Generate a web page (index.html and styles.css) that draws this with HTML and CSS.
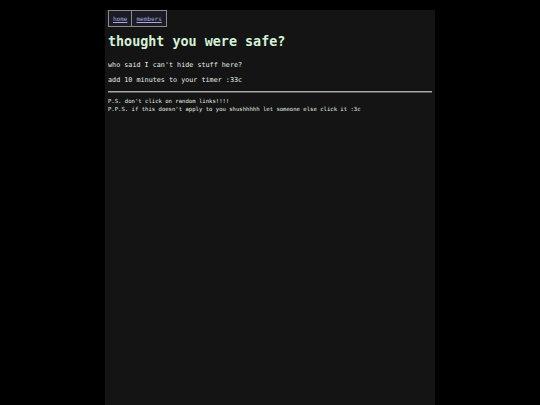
FILE: index.html
```html
<!DOCTYPE html>
<html>
<head>
<meta charset="utf-8">
<link rel="stylesheet" href="styles.css">
</head>
<body>
<main class="page">
  <nav class="nav">
    <a class="nav-link" href="#">home</a>
    <a class="nav-link" href="#">members</a>
  </nav>
  <h1 class="title">thought you were safe?</h1>
  <p class="text">who said I can't hide stuff here?</p>
  <p class="text">add 10 minutes to your timer :33c</p>
  <hr class="rule">
  <p class="small">P.S. don't click on random links!!!!</p>
  <p class="small">P.P.S. if this doesn't apply to you shushhhhh let someone else click it :3c</p>
</main>
</body>
</html>
```
FILE: styles.css
```css
html, body {
  margin: 0;
  padding: 0;
  background: #000;
}
body {
  font-family: "DejaVu Sans Mono", "Liberation Mono", monospace;
  color: #e2efe2;
}
.page {
  width: 330px;
  margin: 10px auto 0;
  min-height: 395px;
  background: #141414;
  padding: 0 3px;
  box-sizing: border-box;
  display: flex;
  flex-direction: column;
}
.nav {
  display: flex;
  align-self: flex-start;
  background: #1b1b26;
}
.nav-link {
  display: block;
  font-size: 6px;
  line-height: 15px;
  padding: 0 4px;
  color: #a9a9dc;
  border: 1px solid #8a8a8a;
}
.nav-link + .nav-link {
  border-left: none;
}
.title {
  font-size: 13.4px;
  line-height: 16px;
  font-weight: bold;
  color: #d4f2d6;
  margin: 7px 0 0;
}
.text {
  font-size: 6.75px;
  line-height: 9px;
  margin: 11px 0 0;
}
.text + .text {
  margin-top: 6px;
}
.rule {
  margin: 6px 0 0;
  border: none;
  border-top: 1px solid #a8a8a8;
  border-bottom: 1px solid #5c5c5c;
  height: 0;
}
.small {
  font-size: 5.6px;
  line-height: 8px;
  margin: 0;
}
.rule + .small {
  margin-top: 4px;
}
```
